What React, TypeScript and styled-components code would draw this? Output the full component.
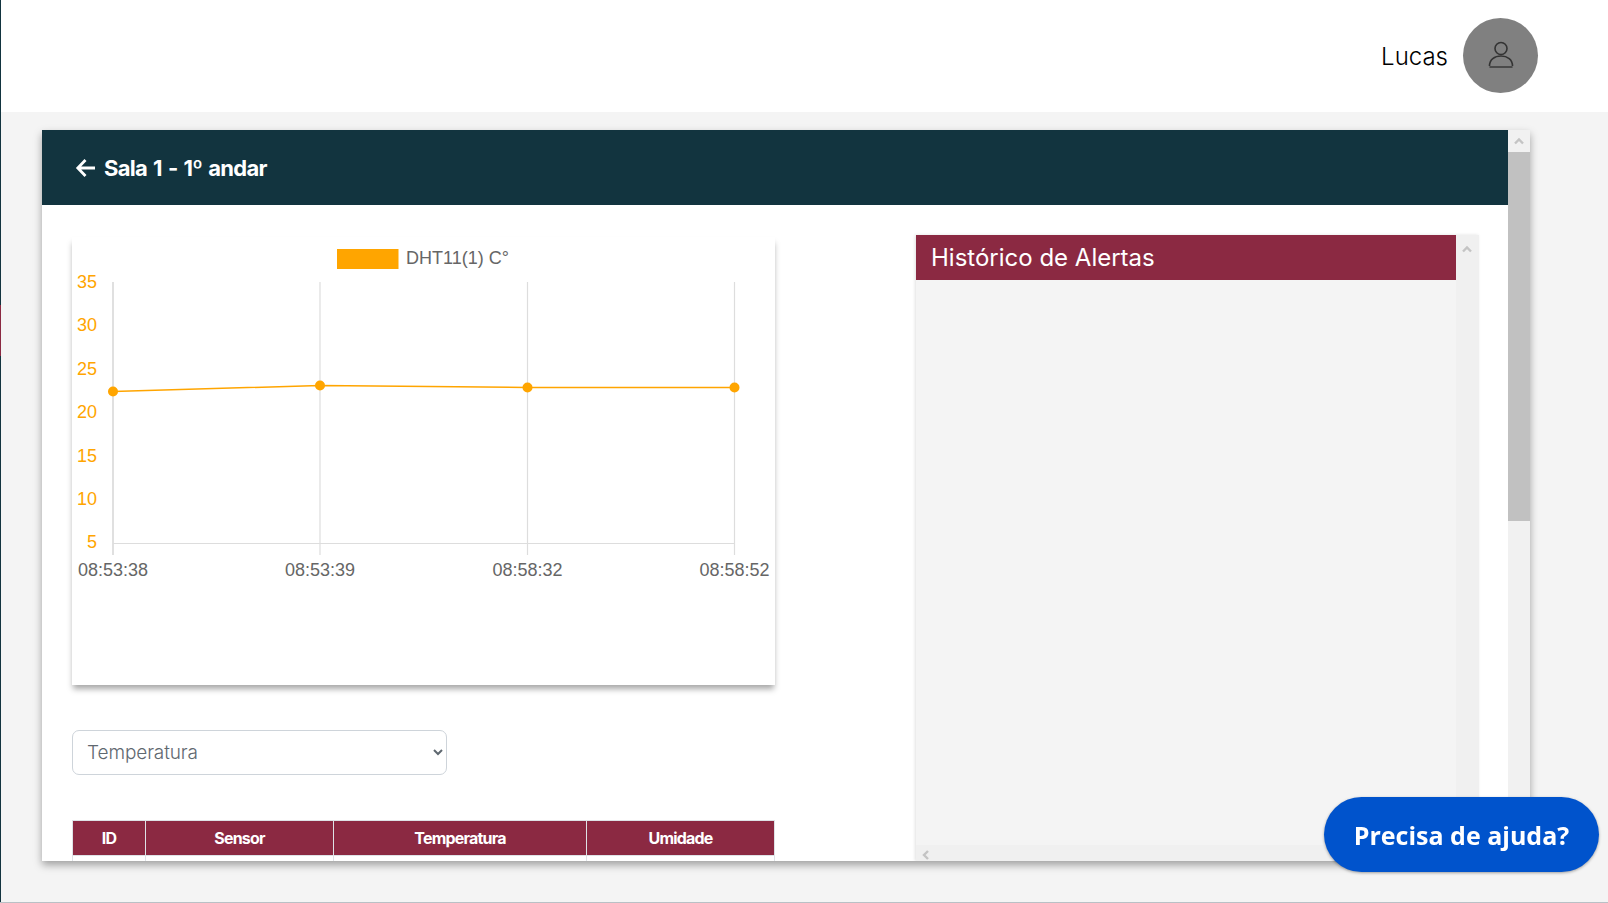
import styled, { createGlobalStyle } from 'styled-components';

const yTicks = [
  { label: '35', y: 44 },
  { label: '30', y: 87 },
  { label: '25', y: 131 },
  { label: '20', y: 174 },
  { label: '15', y: 218 },
  { label: '10', y: 261 },
  { label: '5', y: 304 },
];

const points = [
  { x: 41, y: 154.5, time: '08:53:38' },
  { x: 248, y: 148.5, time: '08:53:39' },
  { x: 455.5, y: 150.5, time: '08:58:32' },
  { x: 662.5, y: 150.5, time: '08:58:52' },
];

const UpChevron = () => (
  <svg width="12" height="12" viewBox="0 0 12 12" fill="none" stroke="#c4c4c4" strokeWidth="2.400">
    <path d="M2 8.500 6 4.500l4 4" />
  </svg>
);

const App = () => {
  return (
    <Page>
      <GlobalStyle />
      <Sidebar>
        <SidebarActive />
      </Sidebar>
      <Shell>
        <TopBar>
          <UserName>Lucas</UserName>
          <Avatar>
            <svg width="36" height="36" viewBox="0 0 36 36" fill="none" stroke="#333" strokeWidth="1.6">
              <circle cx="18" cy="11.5" r="6" />
              <path d="M6.5 29c0-6.5 5-10 11.500-10s11.500 3.500 11.500 10" />
              <path d="M6.500 30h23" strokeWidth="1.400" />
            </svg>
          </Avatar>
        </TopBar>
        <Main>
          <Card>
            <CardBody>
              <CardHeader>
                <svg width="22" height="22" viewBox="0 0 22 22" fill="none" stroke="#fff" strokeWidth="2.800">
                  <path d="M20 11H3M10.500 3 2.800 11l7.700 8" />
                </svg>
                <CardTitle>Sala 1 - 1º andar</CardTitle>
              </CardHeader>
              <Columns>
                <LeftColumn>
                  <ChartCard>
                    <svg width="703" height="448" viewBox="0 0 703 448">
                      <rect x="265" y="12" width="61.500" height="20" fill="#ffa500" />
                      <text x="334" y="26.500" fontSize="18" fill="#666">
                        DHT11(1) C°
                      </text>
                      {yTicks.map((tick) => (
                        <text key={tick.label} x="25" y={tick.y + 6.500} fontSize="18" fill="#ffa500" textAnchor="end">
                          {tick.label}
                        </text>
                      ))}
                      {points.map((point, index) => (
                        <line
                          key={point.time}
                          x1={point.x}
                          x2={point.x}
                          y1="45"
                          y2="318"
                          stroke={index === 0 ? '#ccc' : '#ddd'}
                          strokeWidth="1.200"
                        />
                      ))}
                      <line x1="41" x2="662.500" y1="306.500" y2="306.500" stroke="#ddd" strokeWidth="1.200" />
                      <polyline
                        points={points.map((point) => `${point.x},${point.y}`).join(' ')}
                        fill="none"
                        stroke="#ffa500"
                        strokeWidth="1.500"
                      />
                      {points.map((point) => (
                        <circle key={point.time} cx={point.x} cy={point.y} r="5" fill="#ffa500" />
                      ))}
                      {points.map((point) => (
                        <text key={point.time} x={point.x} y="338.500" fontSize="18" fill="#666" textAnchor="middle">
                          {point.time}
                        </text>
                      ))}
                    </svg>
                  </ChartCard>
                  <SensorSelect defaultValue="Temperatura">
                    <option>Temperatura</option>
                    <option>Umidade</option>
                  </SensorSelect>
                  <ReadingsTable>
                    <thead>
                      <tr>
                        <HeadCell $width={73}>ID</HeadCell>
                        <HeadCell $width={188}>Sensor</HeadCell>
                        <HeadCell $width={253}>Temperatura</HeadCell>
                        <HeadCell $width={188}>Umidade</HeadCell>
                      </tr>
                    </thead>
                    <tbody>
                      <tr>
                        <BodyCell />
                        <BodyCell />
                        <BodyCell />
                        <BodyCell />
                      </tr>
                    </tbody>
                  </ReadingsTable>
                </LeftColumn>
                <AlertsPanel>
                  <AlertsContent>
                    <AlertsMain>
                      <AlertsTitle>Histórico de Alertas</AlertsTitle>
                    </AlertsMain>
                    <HorizontalTrack>
                      <svg width="12" height="12" viewBox="0 0 12 12" fill="none" stroke="#c4c4c4" strokeWidth="2.400">
                        <path d="M8 2 4 6l4 4" />
                      </svg>
                    </HorizontalTrack>
                  </AlertsContent>
                  <PanelTrack>
                    <UpChevron />
                  </PanelTrack>
                </AlertsPanel>
              </Columns>
            </CardBody>
            <PageTrack>
              <TrackButton>
                <UpChevron />
              </TrackButton>
              <TrackThumb />
            </PageTrack>
          </Card>
        </Main>
      </Shell>
      <HelpButton>Precisa de ajuda?</HelpButton>
    </Page>
  );
};

const GlobalStyle = createGlobalStyle`
  html,
  body {
    margin: 0;
    height: 100%;
    overflow: hidden;
  }

  body {
    font-family: Inter, "Liberation Sans", sans-serif;
    background-color: #f4f4f4;
  }

  svg text {
    font-family: "Liberation Sans", Arial, sans-serif;
  }
`;

const Page = styled.div`
  display: flex;
  height: 903px;
  box-sizing: border-box;
  border-bottom: 1px solid #b9c0c5;
  overflow: hidden;
`;

const Sidebar = styled.div`
  width: 1px;
  flex-shrink: 0;
  padding-top: 305px;
  background-color: #12343f;
`;

const SidebarActive = styled.div`
  height: 51px;
  background-color: #8b2942;
`;

const Shell = styled.div`
  flex: 1;
  min-width: 0;
  display: flex;
  flex-direction: column;
`;

const TopBar = styled.header`
  height: 112px;
  flex-shrink: 0;
  display: flex;
  align-items: center;
  justify-content: flex-end;
  column-gap: 15px;
  padding-right: 70px;
  padding-bottom: 2px;
  box-sizing: border-box;
  background-color: #fff;
`;

const UserName = styled.span`
  margin-top: 3px;
  font-size: 24px;
  font-weight: 300;
  line-height: 1;
  color: #000;
`;

const Avatar = styled.div`
  width: 75px;
  height: 75px;
  display: flex;
  align-items: center;
  justify-content: center;
  border-radius: 50%;
  background-color: #808080;
`;

const Main = styled.main`
  padding: 18px 0 0 41px;
`;

const Card = styled.section`
  width: 1488px;
  height: 731px;
  display: flex;
  overflow: hidden;
  background-color: #fff;
  box-shadow: 0 4px 8px rgba(0, 0, 0, 0.35);
`;

const CardBody = styled.div`
  flex: 1;
  min-width: 0;
  display: flex;
  flex-direction: column;
`;

const CardHeader = styled.div`
  height: 75px;
  flex-shrink: 0;
  display: flex;
  align-items: center;
  column-gap: 7px;
  padding-left: 33px;
  box-sizing: border-box;
  background-color: #12343f;
`;

const CardTitle = styled.h1`
  margin: 0;
  font-size: 22px;
  font-weight: 700;
  letter-spacing: -0.7px;
  word-spacing: 1.5px;
  color: #fff;
`;

const Columns = styled.div`
  flex: 1;
  min-height: 0;
  display: flex;
  justify-content: space-between;
  padding: 30px 29px 0 30px;
`;

const LeftColumn = styled.div`
  width: 703px;
  padding-top: 2px;
`;

const ChartCard = styled.div`
  height: 448px;
  background-color: #fff;
  box-shadow: 0 5px 6px -1px rgba(0, 0, 0, 0.35);

  svg {
    display: block;
  }
`;

const SensorSelect = styled.select`
  display: block;
  width: 375px;
  height: 45px;
  margin-top: 45px;
  padding: 0 4px 0 10px;
  font-family: Inter, "Liberation Sans", sans-serif;
  font-size: 19px;
  font-weight: 300;
  letter-spacing: -0.1px;
  color: #5f6870;
  background-color: #fff;
  border: 1px solid #ced4da;
  border-radius: 7px;
`;

const ReadingsTable = styled.table`
  width: 702px;
  margin-top: 45px;
  table-layout: fixed;
  border-collapse: collapse;
`;

const HeadCell = styled.th<{ $width: number }>`
  width: ${(props) => props.$width}px;
  height: 35px;
  padding: 0 0 1px;
  box-sizing: border-box;
  font-size: 16px;
  font-weight: 700;
  letter-spacing: -0.8px;
  text-align: center;
  color: #fff;
  background-color: #8b2942;
  border: 1px solid #dee2e6;
`;

const BodyCell = styled.td`
  height: 35px;
  padding: 0;
  border: 1px solid #dee2e6;
`;

const AlertsPanel = styled.aside`
  width: 563px;
  display: flex;
  background-color: #f4f4f4;
  box-shadow: -1px 0 3px rgba(0, 0, 0, 0.12);
`;

const AlertsContent = styled.div`
  flex: 1;
  min-width: 0;
  display: flex;
  flex-direction: column;
`;

const AlertsMain = styled.div`
  flex: 1;
`;

const AlertsTitle = styled.h2`
  height: 45px;
  margin: 0;
  padding-left: 15px;
  box-sizing: border-box;
  font-size: 24px;
  font-weight: 400;
  line-height: 45px;
  color: #fff;
  background-color: #8b2942;
`;

const HorizontalTrack = styled.div`
  height: 16px;
  display: flex;
  align-items: center;
  padding: 4px 0 0 4px;
  box-sizing: border-box;
  background-color: #f0f0f0;
`;

const PanelTrack = styled.div`
  width: 23px;
  padding: 4px 2px 0 0;
  box-sizing: border-box;
  text-align: center;
  background-color: #f0f0f0;
`;

const PageTrack = styled.div`
  width: 22px;
  flex-shrink: 0;
  background-color: #f1f1f1;
`;

const TrackButton = styled.div`
  height: 22px;
  display: flex;
  align-items: center;
  justify-content: center;
`;

const TrackThumb = styled.div`
  height: 369px;
  background-color: #c1c1c1;
`;

const HelpButton = styled.button`
  position: fixed;
  left: 1324px;
  top: 797px;
  width: 275px;
  height: 75px;
  padding: 0;
  font-family: "Open Sans", "Noto Sans", sans-serif;
  font-size: 25px;
  font-weight: 700;
  color: #fff;
  background-color: #0053cc;
  border: none;
  border-radius: 38px;
  box-shadow: 0 1px 3px rgba(0, 0, 0, 0.35);
`;

export default App;
